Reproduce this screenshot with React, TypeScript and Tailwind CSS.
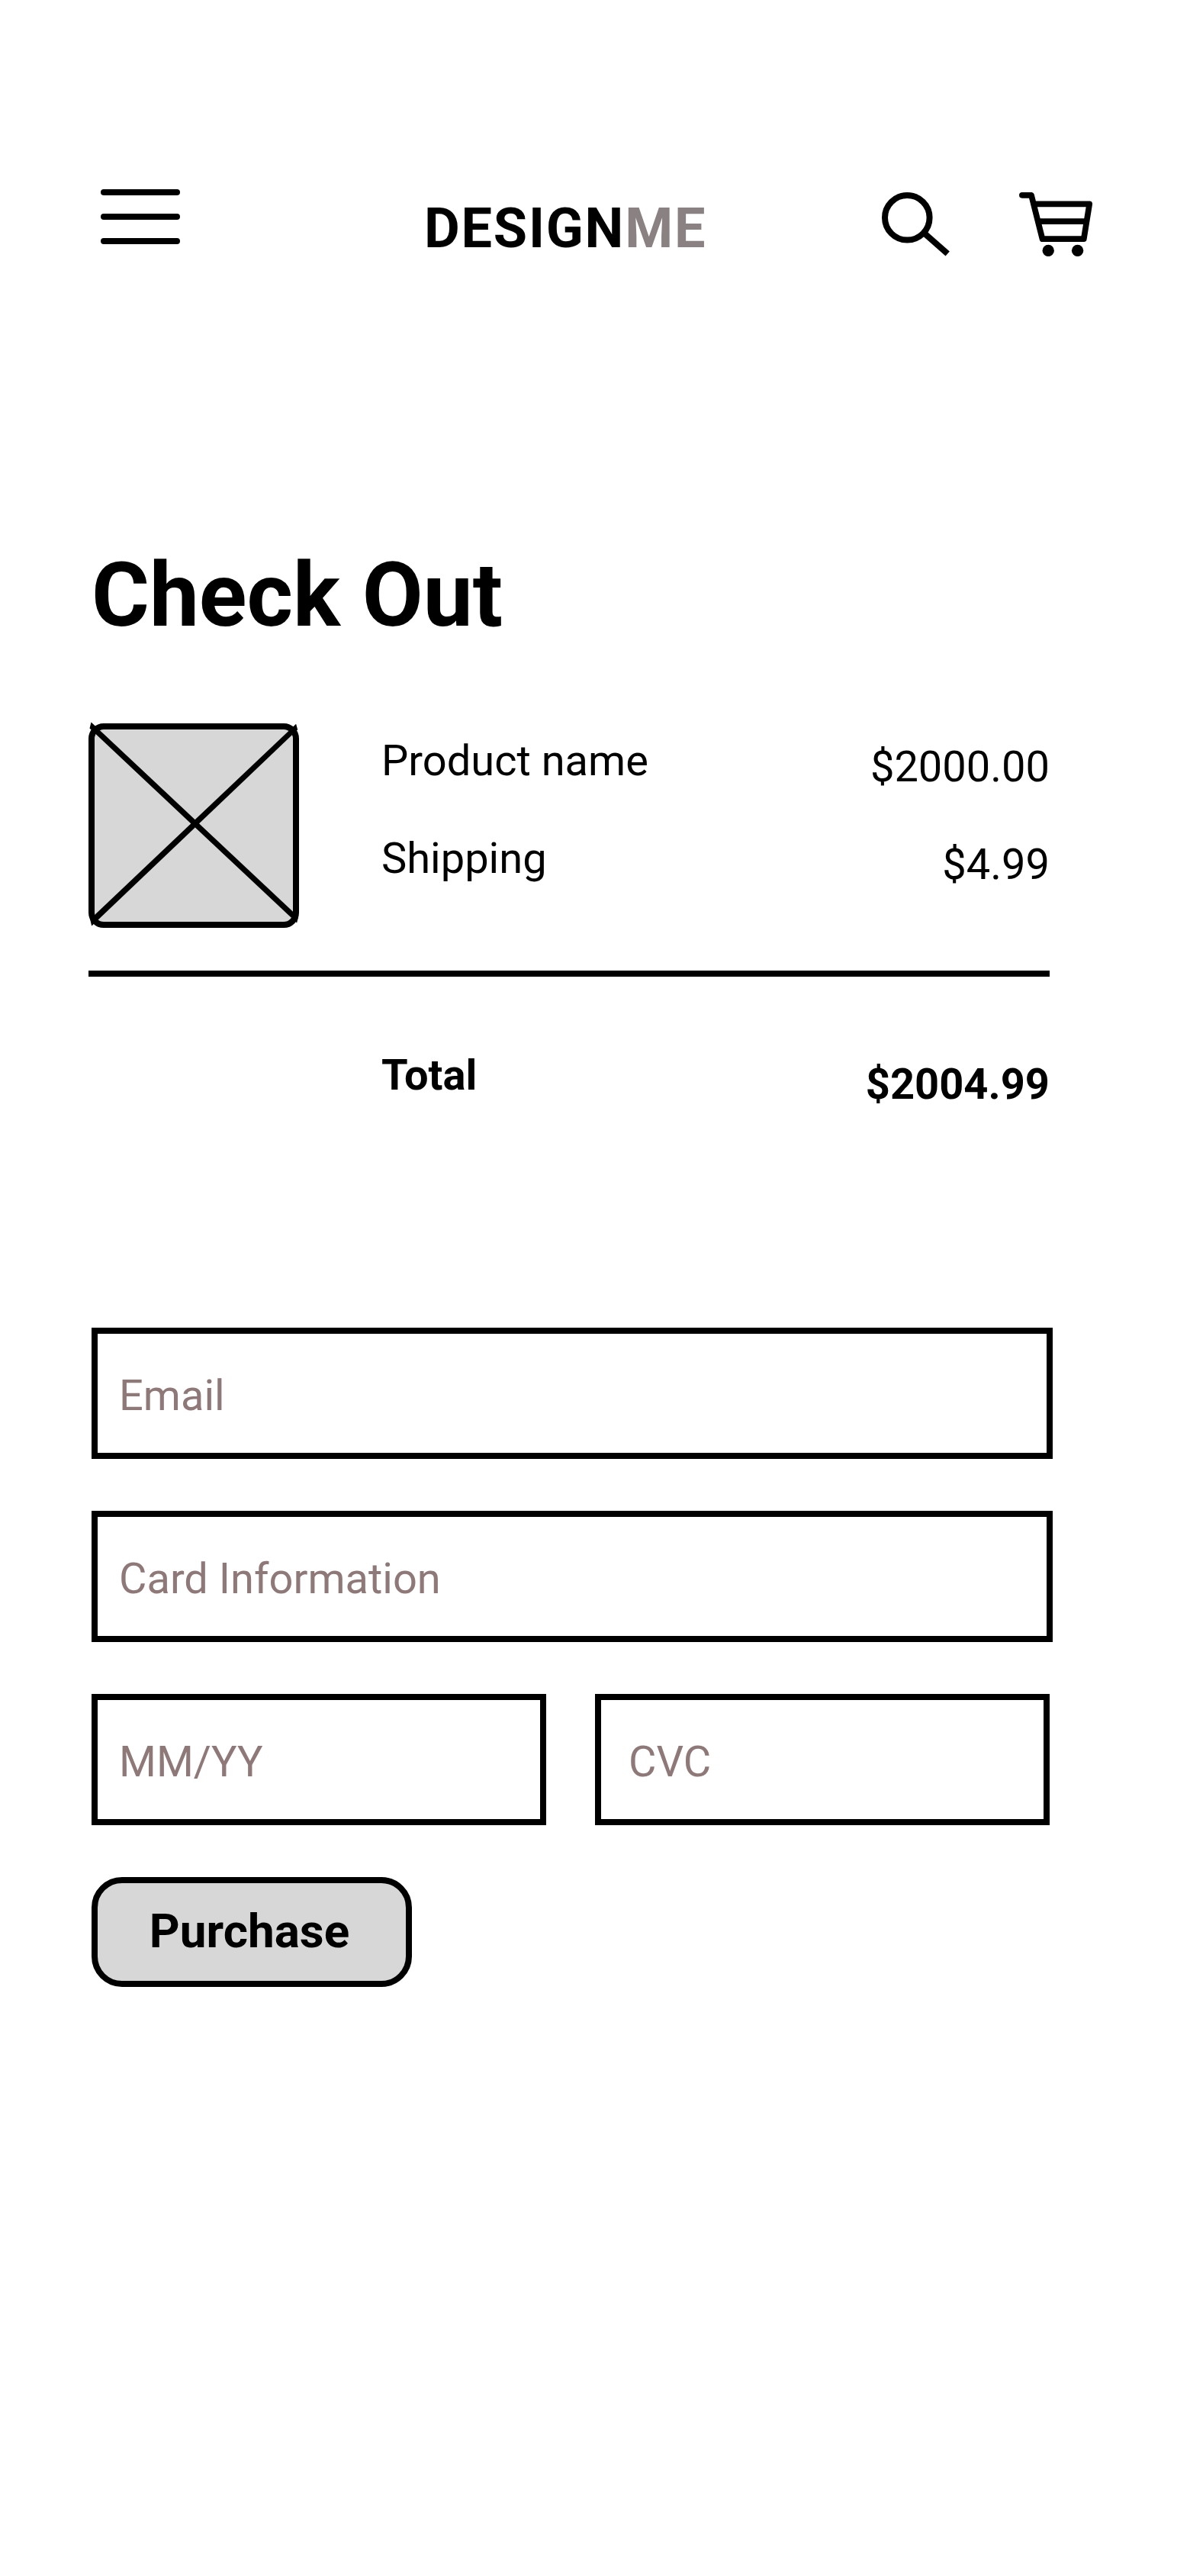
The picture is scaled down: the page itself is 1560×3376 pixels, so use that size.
function MenuIcon() {
  return (
    <svg width="104" height="72" viewBox="0 0 104 72" fill="none" stroke="#000" strokeWidth="8" strokeLinecap="round" aria-hidden="true">
      <path d="M4 4H100M4 36H100M4 68H100" />
    </svg>
  );
}

function SearchIcon() {
  return (
    <svg width="90" height="84" viewBox="0 0 90 84" fill="none" stroke="#000" strokeWidth="8" aria-hidden="true">
      <circle cx="33.3" cy="33.3" r="29.3" />
      <path d="M55.5 53.5L86.2 80.6" />
    </svg>
  );
}

function CartIcon() {
  return (
    <svg width="96" height="84" viewBox="0 0 96 84" aria-hidden="true">
      <g fill="none" stroke="#000" strokeWidth="7.7" strokeLinecap="round" strokeLinejoin="round">
        <path d="M3.9 3.8H16L30.5 61.2H84.8L92.2 15.4H19.5" />
        <path d="M26 38.2H88" />
      </g>
      <circle cx="38.2" cy="76.4" r="7.7" />
      <circle cx="76.6" cy="76.4" r="7.7" />
    </svg>
  );
}

function ImagePlaceholder() {
  return (
    <svg className="block overflow-visible" width="276" height="268" viewBox="0 0 276 268" role="img" aria-label="Product image">
      <rect x="4" y="4" width="268" height="260" rx="16" fill="#d7d7d7" stroke="#000" strokeWidth="8" />
      <path d="M3.5 -1.6L275.2 253.4L273.1 261.6L1.5 6.6Z" />
      <path d="M2.1 256.7L272.1 0.7L274.2 8.3L4.2 265.5Z" />
    </svg>
  );
}

function Field({ label, className }: { label: string; className: string }) {
  return (
    <input
      type="text"
      aria-label={label}
      placeholder={label}
      className={`block h-[172px] rounded-none border-8 border-black bg-white pt-[6px] text-[56px] leading-[66px] text-black outline-none placeholder:text-[#8f7878] placeholder:opacity-100 ${className}`}
    />
  );
}

export default function App() {
  return (
    <div className="flex h-[3376px] w-[1560px] flex-col overflow-hidden bg-white font-[Roboto,sans-serif] text-black">
      <header className="flex h-[360px] items-start pl-[132px]">
        <button type="button" aria-label="Menu" className="mt-[248px] block">
          <MenuIcon />
        </button>
        <h1 className="mt-[257px] ml-[320px] w-[600px] text-[72px] leading-[85px] font-bold tracking-[1.76px] whitespace-nowrap">
          DESIGN<span className="text-[#8a8282]">ME</span>
        </h1>
        <button type="button" aria-label="Search" className="mt-[252px] block shrink-0">
          <SearchIcon />
        </button>
        <button type="button" aria-label="Cart" className="mt-[252px] ml-[90px] block shrink-0">
          <CartIcon />
        </button>
      </header>

      <main className="pt-[352px] pl-[116px]">
        <h2 className="ml-1 text-[116px] leading-[136px] font-bold">Check Out</h2>

        <section className="mt-[100px] w-[1260px]">
          <div className="flex h-[324px] items-start">
            <ImagePlaceholder />
            <div className="ml-[108px] flex flex-col gap-[62px] pt-4 text-[56px] leading-[66px]">
              <span>Product name</span>
              <span>Shipping</span>
            </div>
            <div className="ml-auto flex flex-col gap-[62px] pt-6 text-right text-[56px] leading-[66px]">
              <span>$2000.00</span>
              <span>$4.99</span>
            </div>
          </div>
          <div className="h-2 bg-black" />
          <div className="flex items-start justify-between pt-24 pl-[384px] text-[56px] leading-[66px] font-bold">
            <span>Total</span>
            <span className="mt-3">$2004.99</span>
          </div>
        </section>

        <form className="mt-[286px] ml-1 flex w-[1260px] flex-col gap-[68px]">
          <Field label="Email" className="w-[1260px] pl-7" />
          <Field label="Card Information" className="w-[1260px] pl-7" />
          <div className="flex gap-16">
            <Field label="MM/YY" className="w-[596px] pl-7" />
            <Field label="CVC" className="w-[596px] pl-9" />
          </div>
          <button
            type="button"
            className="h-[144px] w-[420px] rounded-[40px] border-8 border-black bg-[#d7d7d7] pr-1.5 pb-1 text-[62px] leading-[73px] font-bold"
          >
            Purchase
          </button>
        </form>
      </main>
    </div>
  );
}
